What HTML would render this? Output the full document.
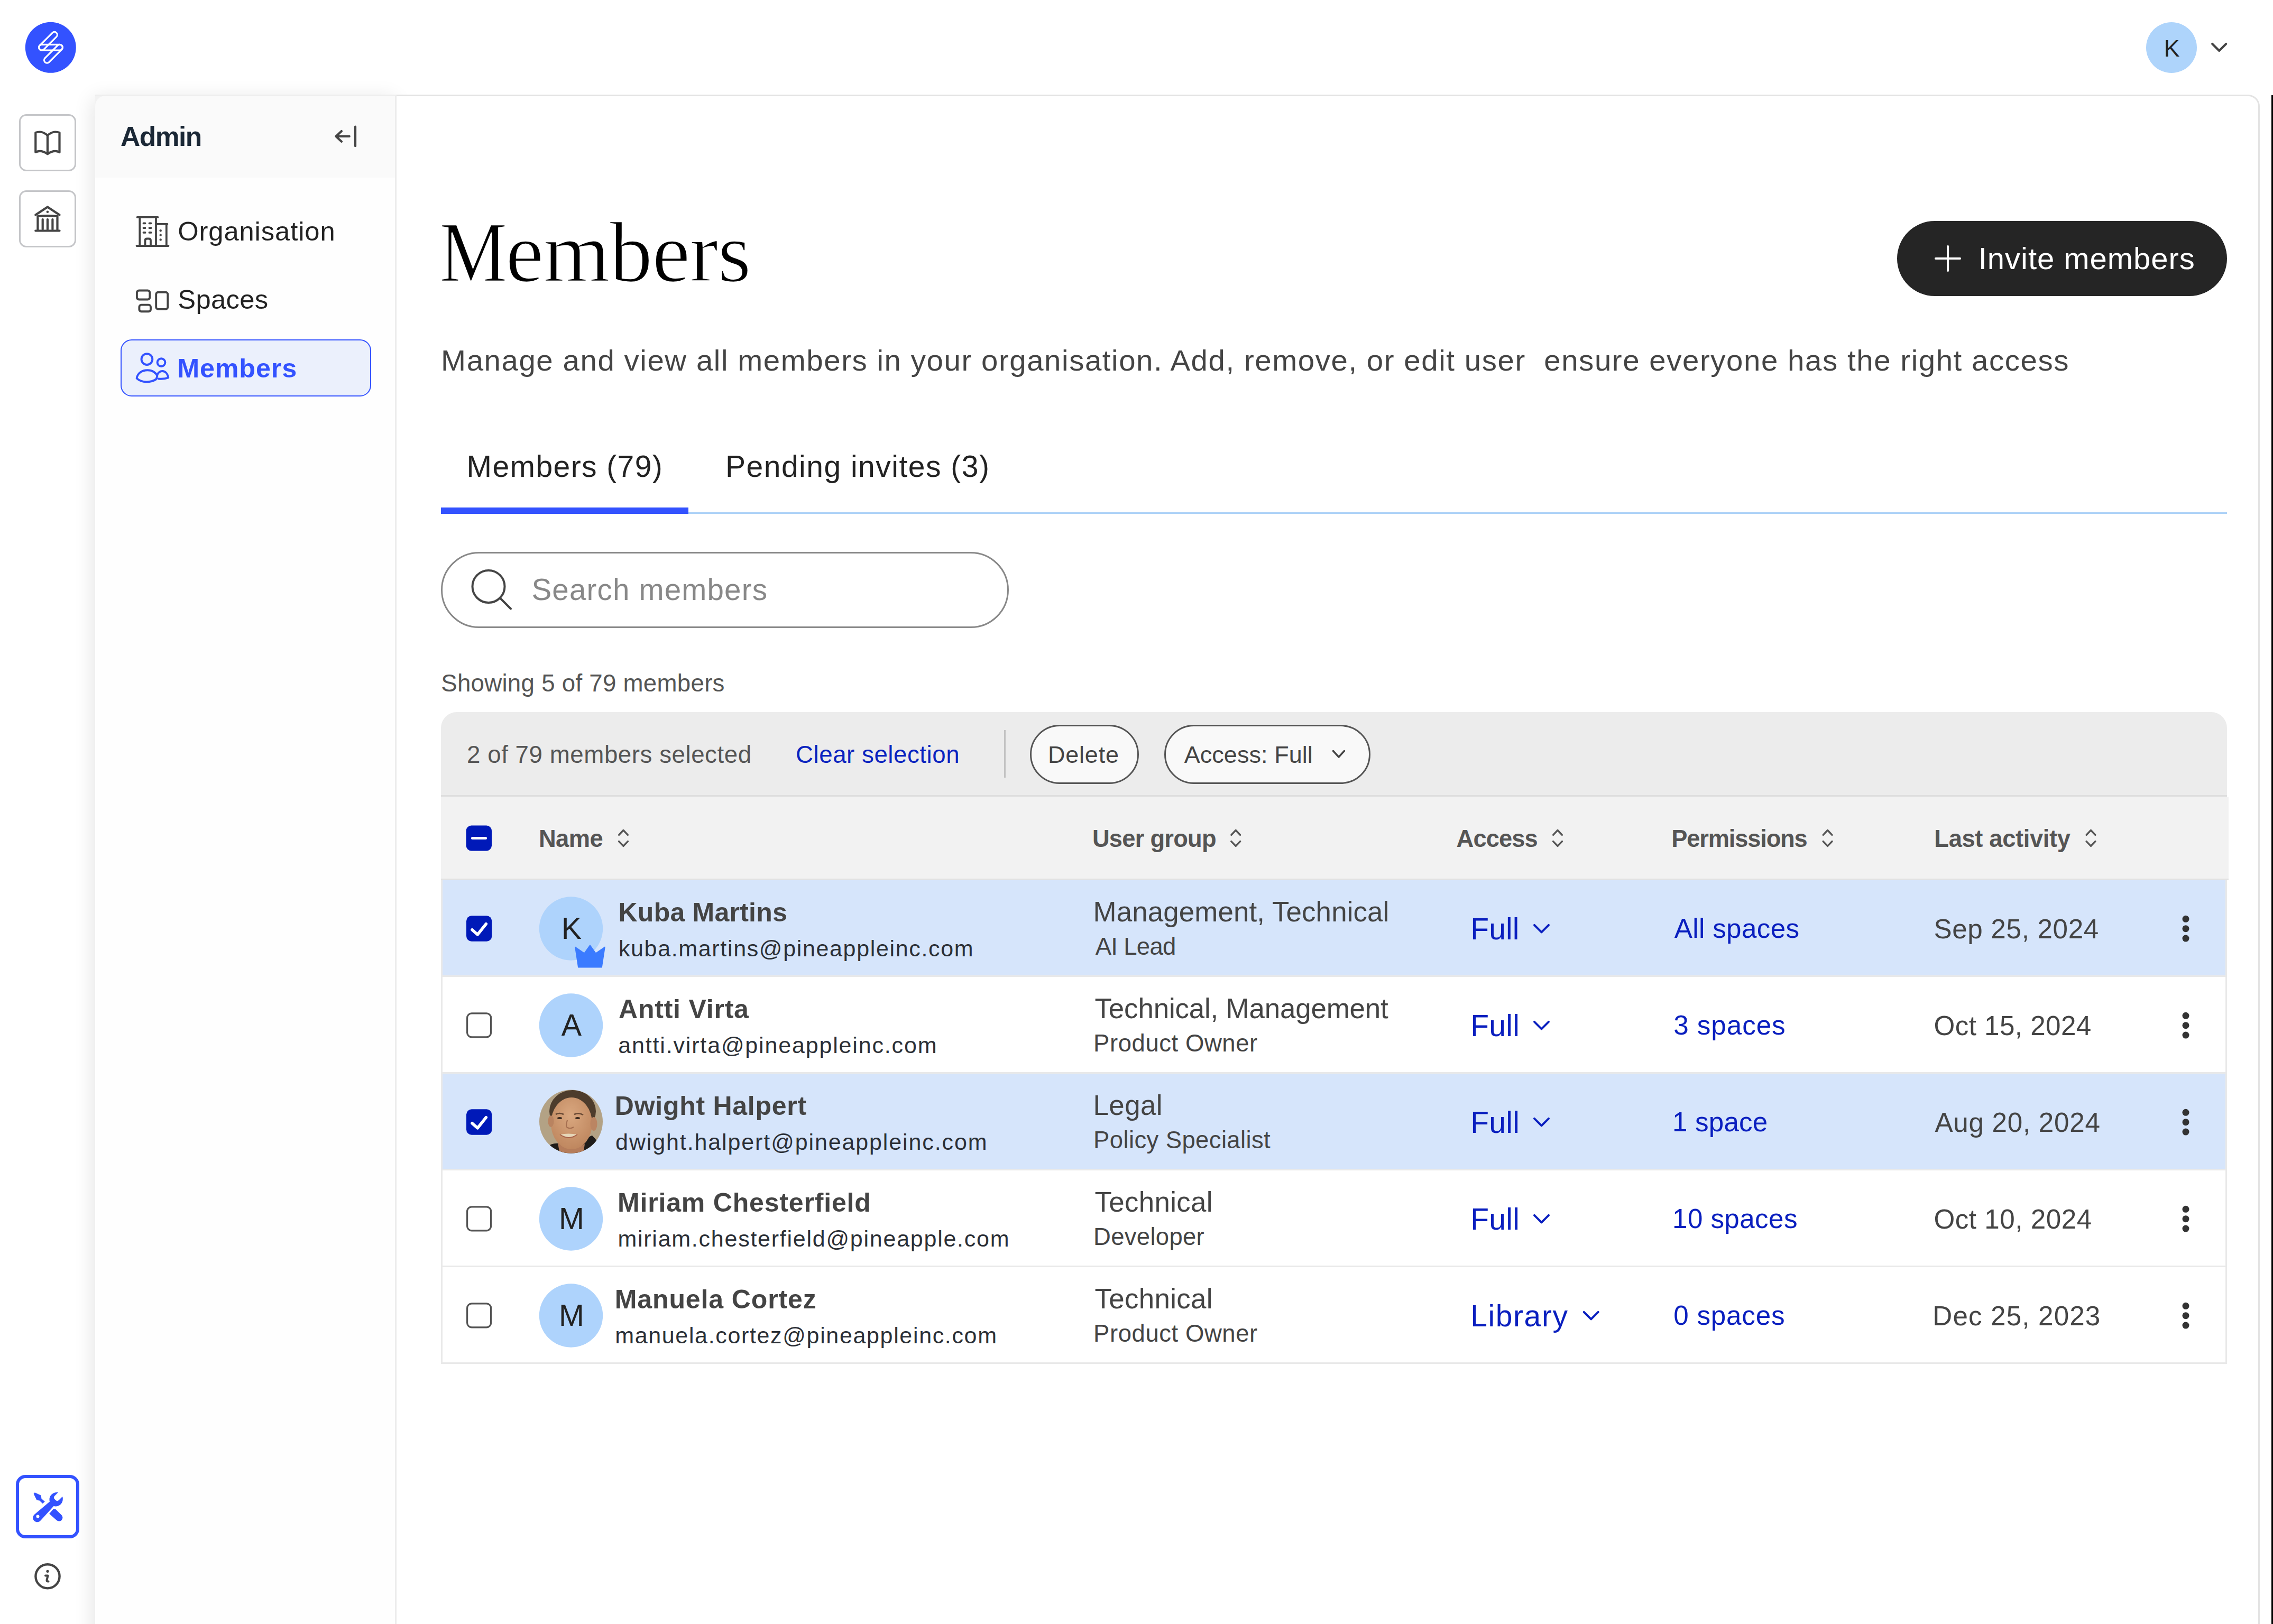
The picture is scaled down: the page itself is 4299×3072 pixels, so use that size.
<!DOCTYPE html>
<html><head><meta charset="utf-8"><title>Members</title>
<style>
html,body{margin:0;padding:0;}
body{width:4299px;height:3072px;overflow:hidden;background:#ffffff;font-family:"Liberation Sans",sans-serif;}
.root{position:relative;width:4299px;height:3072px;overflow:hidden;background:#ffffff;}
.abs{position:absolute;box-sizing:border-box;}
.tx{position:absolute;white-space:pre;line-height:1;}
</style></head><body><div class="root">
<!-- sidebar panel shadow -->
<div class="abs" style="left:180px;top:179px;width:570px;height:3000px;box-shadow:-4px 7px 36px rgba(0,0,0,0.11);background:#f2f2f2;"></div>
<div class="abs" style="left:180px;top:181px;width:567px;height:155px;background:#fafafa;border-top-left-radius:20px;"></div>
<div class="abs" style="left:180px;top:336px;width:567px;height:2800px;background:#fefefe;"></div>
<div class="abs" style="left:747px;top:181px;width:3px;height:2900px;background:#ececec;"></div>
<!-- top border of panel -->
<div class="abs" style="left:180px;top:178.5px;width:570px;height:2.5px;background:#ededed;"></div>
<!-- main panel -->
<div class="abs" style="left:750px;top:178.5px;width:3523.5px;height:3000px;border-top:3px solid #e3e3e3;border-right:3px solid #e3e3e3;border-top-right-radius:22px;background:#ffffff;"></div>
<div class="abs" style="left:4296px;top:180px;width:3px;height:2900px;background:#000;"></div>
<!-- rail -->
<div class="abs" style="left:36px;top:216px;width:108px;height:108px;border:3px solid #c4c5c8;border-radius:14px;background:#fff;"></div>
<div class="abs" style="left:36px;top:360px;width:108px;height:108px;border:3px solid #c4c5c8;border-radius:14px;background:#fff;"></div>
<div class="abs" style="left:30px;top:2790px;width:120px;height:120px;border:6px solid #3352ff;border-radius:18px;background:#fff;"></div>
<!-- nav active -->
<div class="abs" style="left:228px;top:642px;width:474px;height:108px;border:2px solid #3352ff;border-radius:21px;background:#ebf0fc;"></div>
<!-- invite -->
<div class="abs" style="left:3588px;top:418px;width:624px;height:142px;border-radius:71px;background:#252525;"></div>
<!-- tabs -->
<div class="abs" style="left:834px;top:968.5px;width:3378px;height:3.5px;background:#acd1f7;"></div>
<div class="abs" style="left:834px;top:960px;width:468px;height:11.5px;background:#3352ff;"></div>
<!-- search -->
<div class="abs" style="left:834px;top:1044px;width:1074px;height:144px;border:3px solid #888888;border-radius:72px;background:#fff;"></div>
<!-- toolbar -->
<div class="abs" style="left:834px;top:1347px;width:3378px;height:159.5px;background:#ececec;border-top-left-radius:30px;border-top-right-radius:30px;border-bottom:3.5px solid #dedede;"></div>
<div class="abs" style="left:1899px;top:1381px;width:3px;height:90px;background:#c2c2c2;"></div>
<div class="abs" style="left:1947.5px;top:1371px;width:206px;height:111.5px;border:3.5px solid #555555;border-radius:56px;background:#f9f9f9;"></div>
<div class="abs" style="left:2202px;top:1371px;width:389.5px;height:111.5px;border:3.5px solid #555555;border-radius:56px;background:#f9f9f9;"></div>
<!-- table header -->
<div class="abs" style="left:834px;top:1506.5px;width:3381px;height:158.5px;background:#f2f2f2;border-bottom:3px solid #e2e2e2;"></div>
<div class="abs" style="left:834px;top:1665.0px;width:3378px;height:183.0px;background:#d6e5fb;border-left:3px solid #e9e9e9;border-right:3px solid #e9e9e9;border-bottom:3.4px solid #e9e9e9;"></div>
<div class="abs" style="left:834px;top:1848.0px;width:3378px;height:183.0px;background:#ffffff;border-left:3px solid #e9e9e9;border-right:3px solid #e9e9e9;border-bottom:3.4px solid #e9e9e9;"></div>
<div class="abs" style="left:834px;top:2031.0px;width:3378px;height:183.0px;background:#d6e5fb;border-left:3px solid #e9e9e9;border-right:3px solid #e9e9e9;border-bottom:3.4px solid #e9e9e9;"></div>
<div class="abs" style="left:834px;top:2214.0px;width:3378px;height:183.0px;background:#ffffff;border-left:3px solid #e9e9e9;border-right:3px solid #e9e9e9;border-bottom:3.4px solid #e9e9e9;"></div>
<div class="abs" style="left:834px;top:2397.0px;width:3378px;height:183.0px;background:#ffffff;border-left:3px solid #e9e9e9;border-right:3px solid #e9e9e9;border-bottom:3.4px solid #e9e9e9;"></div>
<svg class="abs" style="left:0;top:0;" width="4299" height="3072" viewBox="0 0 4299 3072">
<defs>
<clipPath id="faceclip"><circle cx="1080" cy="2121.5" r="60"/></clipPath>
<radialGradient id="skin" cx="0.48" cy="0.35" r="0.65"><stop offset="0" stop-color="#d9a77f"/><stop offset="1" stop-color="#bf875f"/></radialGradient>
</defs>
<!-- logo -->
<circle cx="95.8" cy="89.8" r="48" fill="#3352ff"/>
<g fill="none" stroke="#ffffff" stroke-width="3.2">
<rect x="68.85" y="72.35" width="44.4" height="10.8" rx="5.4" transform="rotate(-45 91.05 77.75)"/>
<rect x="73.5" y="84.4" width="44.9" height="10.8" rx="5.4"/>
<rect x="78.55" y="96.35" width="44.7" height="10.8" rx="5.4" transform="rotate(-45 100.9 101.75)"/>
</g>
<!-- book -->
<g fill="none" stroke="#444444" stroke-width="4.2" stroke-linejoin="round" stroke-linecap="round">
<path d="M89.9 256 C85 252 80 249.5 75.4 249.5 C72 249.5 69.5 250 67.3 251 L67.3 288 C69.5 286.8 72 285.8 75.4 285.8 C80 285.8 85 287.8 89.9 291.3 C94.8 287.8 99.8 285.8 104.4 285.8 C107.8 285.8 110.3 286.8 112.5 288 L112.5 251 C110.3 250 107.8 249.5 104.4 249.5 C99.8 249.5 94.8 252 89.9 256 Z"/>
<path d="M89.9 256 L89.9 290"/>
</g>
<!-- bank -->
<g fill="none" stroke="#444444" stroke-width="4.2" stroke-linejoin="round" stroke-linecap="round">
<path d="M67.3 406.5 L89.9 391.4 L112.5 406.5"/>
<path d="M71.4 436 L71.4 409.2 Q89.9 406.8 108.5 409.2 L108.5 436"/>
<path d="M80.7 415 L80.7 434 M89.9 415 L89.9 434 M99.4 415 L99.4 434"/>
<path d="M67.3 436.5 L112.5 436.5"/>
</g>
<circle cx="89.9" cy="400.7" r="2.3" fill="#444444"/>
<!-- organisation -->
<g fill="none" stroke="#444444" stroke-width="3.8" stroke-linecap="round" stroke-linejoin="round">
<path d="M258.5 465 L318.5 465"/>
<path d="M264.3 465 L264.3 410.8 M259.6 410.8 L298.5 410.8 M295 465 L295 410.8"/>
<path d="M295 423.8 L316.5 423.8 M314.8 423.8 L314.8 465"/>
<path d="M274.5 465 L274.5 455 Q274.5 451.5 278 451.5 L281.5 451.5 Q285 451.5 285 455 L285 465"/>
<path d="M271.5 422.4 L274.5 422.4 M282.5 422.4 L285.5 422.4 M271.5 431.2 L274.5 431.2 M282.5 431.2 L285.5 431.2 M271.5 439.9 L274.5 439.9 M282.5 439.9 L285.5 439.9"/>
</g>
<g fill="#444444"><circle cx="303.7" cy="436.2" r="2.2"/><circle cx="303.7" cy="444.8" r="2.2"/><circle cx="303.7" cy="453.4" r="2.2"/></g>
<!-- spaces -->
<g fill="none" stroke="#444444" stroke-width="3.9">
<rect x="258.9" y="549.5" width="24.4" height="17" rx="4"/>
<rect x="263.4" y="576.6" width="21.6" height="12.7" rx="4"/>
<rect x="295.2" y="552.7" width="22.1" height="32.2" rx="4"/>
</g>
<!-- members people -->
<g fill="none" stroke="#3352ff" stroke-width="3.9" stroke-linejoin="round" stroke-linecap="round">
<circle cx="277.9" cy="679.6" r="10.4"/>
<circle cx="305" cy="685.6" r="7.4"/>
<path d="M258.6 715.6 C260 706 268.5 700.2 279 700.2 C287 700.2 294 704 297.5 711 C296 716 295.5 717 295 717.5 C285 724 268 724.5 258.6 715.6 Z"/>
<path d="M297.5 708.5 C300 704 303 702 307 702 C312.5 702 317 706.5 318.3 714.5 C313 716.5 305 717 299.5 716.5"/>
</g>
<!-- collapse -->
<g fill="none" stroke="#444444" stroke-width="4.2" stroke-linecap="round" stroke-linejoin="round">
<path d="M672 239.7 L672 276.2"/>
<path d="M660.7 257.9 L635.5 257.9 M645.9 248.1 L635.5 257.9 L645.9 267.8"/>
</g>
<!-- top right avatar -->
<circle cx="4107" cy="90" r="48" fill="#aed4fb"/>
<path d="M4184.2 83 L4197.2 96 L4210.2 83" fill="none" stroke="#444444" stroke-width="4.2" stroke-linecap="round" stroke-linejoin="round"/>
<!-- tool icon -->
<g fill="#3352ff">
<path d="M63.6 2825.8 L65.8 2823.2 L77.7 2828.8 L78.4 2834.7 L84.8 2840.6 L80.6 2844.3 L74.7 2838.4 L69.5 2837.7 Z"/>
<path d="M93.2 2863.5 L100.6 2854.7 L105 2854.7 L116.5 2866 A6.8 6.8 0 0 1 106.8 2875.6 Z"/>
<path d="M108.5 2822.9 C100 2822.5 93 2829 93.5 2837 C93.5 2838.5 93.7 2839.5 94 2840.5 L65.5 2864.5 C61 2868.5 61.5 2874.5 65.5 2877.5 C69.5 2880.5 74.5 2879.5 77.5 2875.5 L101.5 2849 C102.5 2849.3 103.8 2849.5 105 2849.5 C113.5 2849.5 119 2843 118.8 2835 C118.8 2833.5 118.5 2832 118 2831 L111 2838 C109.5 2839.5 107 2839.5 105.5 2838 L103 2835.5 C101.5 2834 101.5 2831.5 103 2830 L110 2823 C109.5 2823 109 2822.9 108.5 2822.9 Z"/>
</g>
<circle cx="71.5" cy="2868.5" r="3" fill="#ffffff"/>
<!-- info -->
<circle cx="90" cy="2981.8" r="22.6" fill="none" stroke="#444444" stroke-width="4.4"/>
<circle cx="90" cy="2972.3" r="2.6" fill="#444444"/>
<path d="M86 2980.5 L90.5 2980.5 L88.5 2989 Q88 2991.5 91.5 2991.5" fill="none" stroke="#444444" stroke-width="4" stroke-linecap="round" stroke-linejoin="round"/>
<!-- plus -->
<path d="M3661 489 L3707.2 489 M3684.1 465.9 L3684.1 512.1" stroke="#ffffff" stroke-width="4" stroke-linecap="round"/>
<!-- search icon -->
<circle cx="924" cy="1109.4" r="30.5" fill="none" stroke="#444444" stroke-width="4"/>
<path d="M946 1131.5 L966 1151.5" stroke="#444444" stroke-width="4" stroke-linecap="round"/>
<!-- access full chevron -->
<path d="M2521.5 1420.5 L2532 1432 L2542.5 1420.5" fill="none" stroke="#444444" stroke-width="3.4" stroke-linecap="round" stroke-linejoin="round"/>
<!-- header checkbox indeterminate -->
<rect x="881.6" y="1561.5" width="48.4" height="48" rx="10" fill="#0019b8"/>
<path d="M893.5 1585.5 L918.5 1585.5" stroke="#ffffff" stroke-width="5" stroke-linecap="round"/>
<!-- sort icons -->
<g fill="none" stroke="#555555" stroke-width="3.4" stroke-linecap="round" stroke-linejoin="round">
<path d="M1170.6 1579.3 L1179.0 1570.5 L1187.4 1579.3 M1170.6 1591.6 L1179.0 1600.4 L1187.4 1591.6"/>
<path d="M2328.8 1579.3 L2337.2 1570.5 L2345.6 1579.3 M2328.8 1591.6 L2337.2 1600.4 L2345.6 1591.6"/>
<path d="M2937.6 1579.3 L2946.0 1570.5 L2954.4 1579.3 M2937.6 1591.6 L2946.0 1600.4 L2954.4 1591.6"/>
<path d="M3448.2 1579.3 L3456.6 1570.5 L3465.0 1579.3 M3448.2 1591.6 L3456.6 1600.4 L3465.0 1591.6"/>
<path d="M3946.1 1579.3 L3954.5 1570.5 L3962.9 1579.3 M3946.1 1591.6 L3954.5 1600.4 L3962.9 1591.6"/>
</g>
<rect x="882" y="1732.3" width="48.3" height="48.4" rx="10" fill="#0019b8"/>
<path d="M893 1758.8 L903.3 1767.8 L919.3 1747.8" fill="none" stroke="#ffffff" stroke-width="5.6" stroke-linecap="round" stroke-linejoin="round"/>
<circle cx="1080" cy="1756.5" r="60.2" fill="#aed3fc"/>
<text x="1081" y="1776.1" text-anchor="middle" font-family="Liberation Sans" font-size="57.4" fill="#222222">K</text>
<path d="M2902.0 1749.8 L2915.5 1763.3 L2929.0 1749.8" fill="none" stroke="#0a1fbf" stroke-width="4" stroke-linecap="round" stroke-linejoin="round"/>
<circle cx="4134" cy="1738.3" r="6.5" fill="#333333"/>
<circle cx="4134" cy="1756.7" r="6.5" fill="#333333"/>
<circle cx="4134" cy="1775.1" r="6.5" fill="#333333"/>
<rect x="883.6" y="1916.9" width="45" height="45" rx="8.5" fill="#ffffff" stroke="#555555" stroke-width="3.2"/>
<circle cx="1080" cy="1939.5" r="60.2" fill="#aed3fc"/>
<text x="1081" y="1959.1" text-anchor="middle" font-family="Liberation Sans" font-size="57.4" fill="#222222">A</text>
<path d="M2902.0 1932.8 L2915.5 1946.3 L2929.0 1932.8" fill="none" stroke="#0a1fbf" stroke-width="4" stroke-linecap="round" stroke-linejoin="round"/>
<circle cx="4134" cy="1921.3" r="6.5" fill="#333333"/>
<circle cx="4134" cy="1939.7" r="6.5" fill="#333333"/>
<circle cx="4134" cy="1958.1" r="6.5" fill="#333333"/>
<rect x="882" y="2098.3" width="48.3" height="48.4" rx="10" fill="#0019b8"/>
<path d="M893 2124.8 L903.3 2133.8 L919.3 2113.8" fill="none" stroke="#ffffff" stroke-width="5.6" stroke-linecap="round" stroke-linejoin="round"/>
<path d="M2902.0 2115.8 L2915.5 2129.3 L2929.0 2115.8" fill="none" stroke="#0a1fbf" stroke-width="4" stroke-linecap="round" stroke-linejoin="round"/>
<circle cx="4134" cy="2104.3" r="6.5" fill="#333333"/>
<circle cx="4134" cy="2122.7" r="6.5" fill="#333333"/>
<circle cx="4134" cy="2141.1" r="6.5" fill="#333333"/>
<rect x="883.6" y="2282.9" width="45" height="45" rx="8.5" fill="#ffffff" stroke="#555555" stroke-width="3.2"/>
<circle cx="1080" cy="2305.5" r="60.2" fill="#aed3fc"/>
<text x="1081" y="2325.1" text-anchor="middle" font-family="Liberation Sans" font-size="57.4" fill="#222222">M</text>
<path d="M2902.0 2298.8 L2915.5 2312.3 L2929.0 2298.8" fill="none" stroke="#0a1fbf" stroke-width="4" stroke-linecap="round" stroke-linejoin="round"/>
<circle cx="4134" cy="2287.3" r="6.5" fill="#333333"/>
<circle cx="4134" cy="2305.7" r="6.5" fill="#333333"/>
<circle cx="4134" cy="2324.1" r="6.5" fill="#333333"/>
<rect x="883.6" y="2465.9" width="45" height="45" rx="8.5" fill="#ffffff" stroke="#555555" stroke-width="3.2"/>
<circle cx="1080" cy="2488.5" r="60.2" fill="#aed3fc"/>
<text x="1081" y="2508.1" text-anchor="middle" font-family="Liberation Sans" font-size="57.4" fill="#222222">M</text>
<path d="M2995.7 2481.8 L3009.2 2495.3 L3022.7 2481.8" fill="none" stroke="#0a1fbf" stroke-width="4" stroke-linecap="round" stroke-linejoin="round"/>
<circle cx="4134" cy="2470.3" r="6.5" fill="#333333"/>
<circle cx="4134" cy="2488.7" r="6.5" fill="#333333"/>
<circle cx="4134" cy="2507.1" r="6.5" fill="#333333"/>
<path d="M1087.9 1791.4 L1105.1 1803.2 L1115.9 1787.9 L1126.8 1803.2 L1144 1791.4 L1138.1 1829.8 L1093.8 1829.8 Z" fill="#3b7bff" stroke="#3b7bff" stroke-width="1.5" stroke-linejoin="round"/>
<g clip-path="url(#faceclip)">
<rect x="1015" y="2056" width="130" height="130" fill="#b3a285"/>
<path d="M1028 2190 L1034 2170 Q1046 2160 1062 2164 L1098 2170 Q1110 2150 1120 2148 Q1134 2160 1142 2190 Z" fill="#1f1c1a"/>
<path d="M1055 2162 Q1078 2182 1106 2164 L1102 2190 L1060 2190 Z" fill="#b57c5a"/>
<ellipse cx="1083" cy="2102" rx="44" ry="40" fill="#4d3c2c"/>
<ellipse cx="1081" cy="2125" rx="39" ry="49" fill="url(#skin)"/>
<ellipse cx="1042" cy="2121" rx="5.5" ry="11" fill="#b98360"/>
<ellipse cx="1123" cy="2126" rx="6.5" ry="13" fill="#bb8562"/>
<path d="M1051 2108 Q1058 2104 1066 2108" stroke="#6a4a35" stroke-width="2.6" fill="none"/>
<path d="M1086 2108 Q1095 2104 1103 2109" stroke="#6a4a35" stroke-width="2.6" fill="none"/>
<ellipse cx="1058.5" cy="2115" rx="4.5" ry="2" fill="#3c2b20"/>
<ellipse cx="1092.5" cy="2115" rx="4.5" ry="2" fill="#3c2b20"/>
<path d="M1073 2119 Q1069 2131 1073 2133 Q1079 2136 1085 2132" stroke="#a56f50" stroke-width="2.2" fill="none"/>
<path d="M1059 2146 Q1075 2143 1092 2146 Q1076 2156 1059 2146 Z" fill="#e6d6b8"/>
<path d="M1059 2146 Q1076 2158 1092 2146" stroke="#a8644c" stroke-width="2" fill="none"/>
</g>
<text x="4107.7" y="106.7" text-anchor="middle" font-family="Liberation Sans" font-size="44.6" fill="#222222">K</text>
</svg>

<div class="tx" style="left:228.0px;top:232.8px;font-size:51.5px;font-weight:700;color:#1b2836;letter-spacing:-1.51px;font-family:'Liberation Sans',sans-serif">Admin</div>
<div class="tx" style="left:336.2px;top:413.3px;font-size:50.7px;font-weight:400;color:#222222;letter-spacing:0.91px;font-family:'Liberation Sans',sans-serif">Organisation</div>
<div class="tx" style="left:336.2px;top:541.9px;font-size:50.7px;font-weight:400;color:#222222;letter-spacing:0.39px;font-family:'Liberation Sans',sans-serif">Spaces</div>
<div class="tx" style="left:335.2px;top:671.7px;font-size:50.3px;font-weight:700;color:#3352ff;letter-spacing:0.86px;font-family:'Liberation Sans',sans-serif">Members</div>
<div class="tx" style="transform:scaleX(0.89);transform-origin:0 0;-webkit-text-stroke:2.4px #ffffff;left:831.2px;top:396.3px;font-size:162.5px;font-weight:400;color:#000000;letter-spacing:-0.97px;font-family:'Liberation Serif',serif">M</div>
<div class="tx" style="-webkit-text-stroke:2.4px #ffffff;left:956.3px;top:396.3px;font-size:162.5px;font-weight:400;color:#000000;letter-spacing:-0.97px;font-family:'Liberation Serif',serif">embers</div>
<div class="tx" style="left:3741.8px;top:459.9px;font-size:58px;font-weight:400;color:#ffffff;letter-spacing:0.96px;font-family:'Liberation Sans',sans-serif">Invite members</div>
<div class="tx" style="left:834.1px;top:653.9px;font-size:56.4px;font-weight:400;color:#444444;letter-spacing:1.57px;font-family:'Liberation Sans',sans-serif">Manage and view all members in your organisation. Add, remove, or edit user  ensure everyone has the right access</div>
<div class="tx" style="left:882.6px;top:854.4px;font-size:57px;font-weight:400;color:#222222;letter-spacing:1.40px;font-family:'Liberation Sans',sans-serif">Members (79)</div>
<div class="tx" style="left:1372.0px;top:854.4px;font-size:57px;font-weight:400;color:#222222;letter-spacing:1.49px;font-family:'Liberation Sans',sans-serif">Pending invites (3)</div>
<div class="tx" style="left:1005.5px;top:1087.5px;font-size:56.5px;font-weight:400;color:#888888;letter-spacing:1.17px;font-family:'Liberation Sans',sans-serif">Search members</div>
<div class="tx" style="left:834.2px;top:1270.2px;font-size:45.7px;font-weight:400;color:#555555;letter-spacing:0.25px;font-family:'Liberation Sans',sans-serif">Showing 5 of 79 members</div>
<div class="tx" style="left:883.0px;top:1404.8px;font-size:45.7px;font-weight:400;color:#555555;letter-spacing:0.54px;font-family:'Liberation Sans',sans-serif">2 of 79 members selected</div>
<div class="tx" style="left:1505.0px;top:1404.8px;font-size:45.7px;font-weight:400;color:#0a23bf;letter-spacing:0.53px;font-family:'Liberation Sans',sans-serif">Clear selection</div>
<div class="tx" style="left:1982.0px;top:1405.2px;font-size:45px;font-weight:400;color:#444444;letter-spacing:0.77px;font-family:'Liberation Sans',sans-serif">Delete</div>
<div class="tx" style="left:2239.7px;top:1405.2px;font-size:45px;font-weight:400;color:#444444;letter-spacing:0.05px;font-family:'Liberation Sans',sans-serif">Access: Full</div>
<div class="tx" style="left:1019.0px;top:1564.3px;font-size:45.3px;font-weight:700;color:#555555;letter-spacing:-0.59px;font-family:'Liberation Sans',sans-serif">Name</div>
<div class="tx" style="left:2065.9px;top:1564.3px;font-size:45.3px;font-weight:700;color:#555555;letter-spacing:-0.76px;font-family:'Liberation Sans',sans-serif">User group</div>
<div class="tx" style="left:2754.6px;top:1564.3px;font-size:45.3px;font-weight:700;color:#555555;letter-spacing:-0.93px;font-family:'Liberation Sans',sans-serif">Access</div>
<div class="tx" style="left:3161.3px;top:1564.3px;font-size:45.3px;font-weight:700;color:#555555;letter-spacing:-1.19px;font-family:'Liberation Sans',sans-serif">Permissions</div>
<div class="tx" style="left:3658.3px;top:1564.3px;font-size:45.3px;font-weight:700;color:#555555;letter-spacing:-0.34px;font-family:'Liberation Sans',sans-serif">Last activity</div>
<div class="tx" style="left:1169.5px;top:1700.7px;font-size:50px;font-weight:700;color:#444444;letter-spacing:0.24px;font-family:'Liberation Sans',sans-serif">Kuba Martins</div>
<div class="tx" style="left:1169.9px;top:1772.9px;font-size:43px;font-weight:400;color:#2b2f36;letter-spacing:1.65px;font-family:'Liberation Sans',sans-serif">kuba.martins@pineappleinc.com</div>
<div class="tx" style="left:2067.5px;top:1699.0px;font-size:52.9px;font-weight:400;color:#444444;letter-spacing:0.11px;font-family:'Liberation Sans',sans-serif">Management, Technical</div>
<div class="tx" style="left:2071.7px;top:1768.2px;font-size:45.5px;font-weight:400;color:#444444;letter-spacing:-0.70px;font-family:'Liberation Sans',sans-serif">AI Lead</div>
<div class="tx" style="left:2781.2px;top:1728.5px;font-size:57px;font-weight:400;color:#0a1fbf;letter-spacing:0.15px;font-family:'Liberation Sans',sans-serif">Full</div>
<div class="tx" style="left:3166.7px;top:1731.4px;font-size:51.2px;font-weight:400;color:#0a1fbf;letter-spacing:0.34px;font-family:'Liberation Sans',sans-serif">All spaces</div>
<div class="tx" style="left:3657.4px;top:1731.5px;font-size:51.2px;font-weight:400;color:#444444;letter-spacing:0.67px;font-family:'Liberation Sans',sans-serif">Sep 25, 2024</div>
<div class="tx" style="left:1170.0px;top:1883.7px;font-size:50px;font-weight:700;color:#444444;letter-spacing:0.79px;font-family:'Liberation Sans',sans-serif">Antti Virta</div>
<div class="tx" style="left:1169.3px;top:1955.9px;font-size:43px;font-weight:400;color:#2b2f36;letter-spacing:1.83px;font-family:'Liberation Sans',sans-serif">antti.virta@pineappleinc.com</div>
<div class="tx" style="left:2070.6px;top:1882.0px;font-size:52.9px;font-weight:400;color:#444444;letter-spacing:-0.17px;font-family:'Liberation Sans',sans-serif">Technical, Management</div>
<div class="tx" style="left:2068.1px;top:1951.2px;font-size:45.5px;font-weight:400;color:#444444;letter-spacing:0.55px;font-family:'Liberation Sans',sans-serif">Product Owner</div>
<div class="tx" style="left:2781.2px;top:1911.5px;font-size:57px;font-weight:400;color:#0a1fbf;letter-spacing:0.32px;font-family:'Liberation Sans',sans-serif">Full</div>
<div class="tx" style="left:3165.2px;top:1914.4px;font-size:51.2px;font-weight:400;color:#0a1fbf;letter-spacing:0.95px;font-family:'Liberation Sans',sans-serif">3 spaces</div>
<div class="tx" style="left:3657.4px;top:1914.5px;font-size:51.2px;font-weight:400;color:#444444;letter-spacing:0.44px;font-family:'Liberation Sans',sans-serif">Oct 15, 2024</div>
<div class="tx" style="left:1162.8px;top:2066.7px;font-size:50px;font-weight:700;color:#444444;letter-spacing:0.73px;font-family:'Liberation Sans',sans-serif">Dwight Halpert</div>
<div class="tx" style="left:1164.1px;top:2138.8px;font-size:43px;font-weight:400;color:#2b2f36;letter-spacing:1.88px;font-family:'Liberation Sans',sans-serif">dwight.halpert@pineappleinc.com</div>
<div class="tx" style="left:2067.5px;top:2065.0px;font-size:52.9px;font-weight:400;color:#444444;letter-spacing:0.42px;font-family:'Liberation Sans',sans-serif">Legal</div>
<div class="tx" style="left:2068.1px;top:2134.2px;font-size:45.5px;font-weight:400;color:#444444;letter-spacing:0.37px;font-family:'Liberation Sans',sans-serif">Policy Specialist</div>
<div class="tx" style="left:2781.2px;top:2094.5px;font-size:57px;font-weight:400;color:#0a1fbf;letter-spacing:0.32px;font-family:'Liberation Sans',sans-serif">Full</div>
<div class="tx" style="left:3163.1px;top:2097.4px;font-size:51.2px;font-weight:400;color:#0a1fbf;letter-spacing:0.15px;font-family:'Liberation Sans',sans-serif">1 space</div>
<div class="tx" style="left:3659.4px;top:2097.5px;font-size:51.2px;font-weight:400;color:#444444;letter-spacing:0.72px;font-family:'Liberation Sans',sans-serif">Aug 20, 2024</div>
<div class="tx" style="left:1168.0px;top:2249.7px;font-size:50px;font-weight:700;color:#444444;letter-spacing:0.82px;font-family:'Liberation Sans',sans-serif">Miriam Chesterfield</div>
<div class="tx" style="left:1168.4px;top:2321.8px;font-size:43px;font-weight:400;color:#2b2f36;letter-spacing:1.75px;font-family:'Liberation Sans',sans-serif">miriam.chesterfield@pineapple.com</div>
<div class="tx" style="left:2070.6px;top:2248.0px;font-size:52.9px;font-weight:400;color:#444444;letter-spacing:0.30px;font-family:'Liberation Sans',sans-serif">Technical</div>
<div class="tx" style="left:2068.1px;top:2317.2px;font-size:45.5px;font-weight:400;color:#444444;letter-spacing:0.28px;font-family:'Liberation Sans',sans-serif">Developer</div>
<div class="tx" style="left:2781.2px;top:2277.5px;font-size:57px;font-weight:400;color:#0a1fbf;letter-spacing:0.32px;font-family:'Liberation Sans',sans-serif">Full</div>
<div class="tx" style="left:3163.1px;top:2280.4px;font-size:51.2px;font-weight:400;color:#0a1fbf;letter-spacing:0.38px;font-family:'Liberation Sans',sans-serif">10 spaces</div>
<div class="tx" style="left:3657.4px;top:2280.5px;font-size:51.2px;font-weight:400;color:#444444;letter-spacing:0.53px;font-family:'Liberation Sans',sans-serif">Oct 10, 2024</div>
<div class="tx" style="left:1162.8px;top:2432.7px;font-size:50px;font-weight:700;color:#444444;letter-spacing:0.88px;font-family:'Liberation Sans',sans-serif">Manuela Cortez</div>
<div class="tx" style="left:1163.2px;top:2504.8px;font-size:43px;font-weight:400;color:#2b2f36;letter-spacing:1.65px;font-family:'Liberation Sans',sans-serif">manuela.cortez@pineappleinc.com</div>
<div class="tx" style="left:2070.6px;top:2431.0px;font-size:52.9px;font-weight:400;color:#444444;letter-spacing:0.30px;font-family:'Liberation Sans',sans-serif">Technical</div>
<div class="tx" style="left:2068.1px;top:2500.2px;font-size:45.5px;font-weight:400;color:#444444;letter-spacing:0.55px;font-family:'Liberation Sans',sans-serif">Product Owner</div>
<div class="tx" style="left:2781.2px;top:2460.5px;font-size:57px;font-weight:400;color:#0a1fbf;letter-spacing:1.59px;font-family:'Liberation Sans',sans-serif">Library</div>
<div class="tx" style="left:3165.2px;top:2463.4px;font-size:51.2px;font-weight:400;color:#0a1fbf;letter-spacing:0.79px;font-family:'Liberation Sans',sans-serif">0 spaces</div>
<div class="tx" style="left:3655.3px;top:2463.5px;font-size:51.2px;font-weight:400;color:#444444;letter-spacing:1.14px;font-family:'Liberation Sans',sans-serif">Dec 25, 2023</div>
</div></body></html>
